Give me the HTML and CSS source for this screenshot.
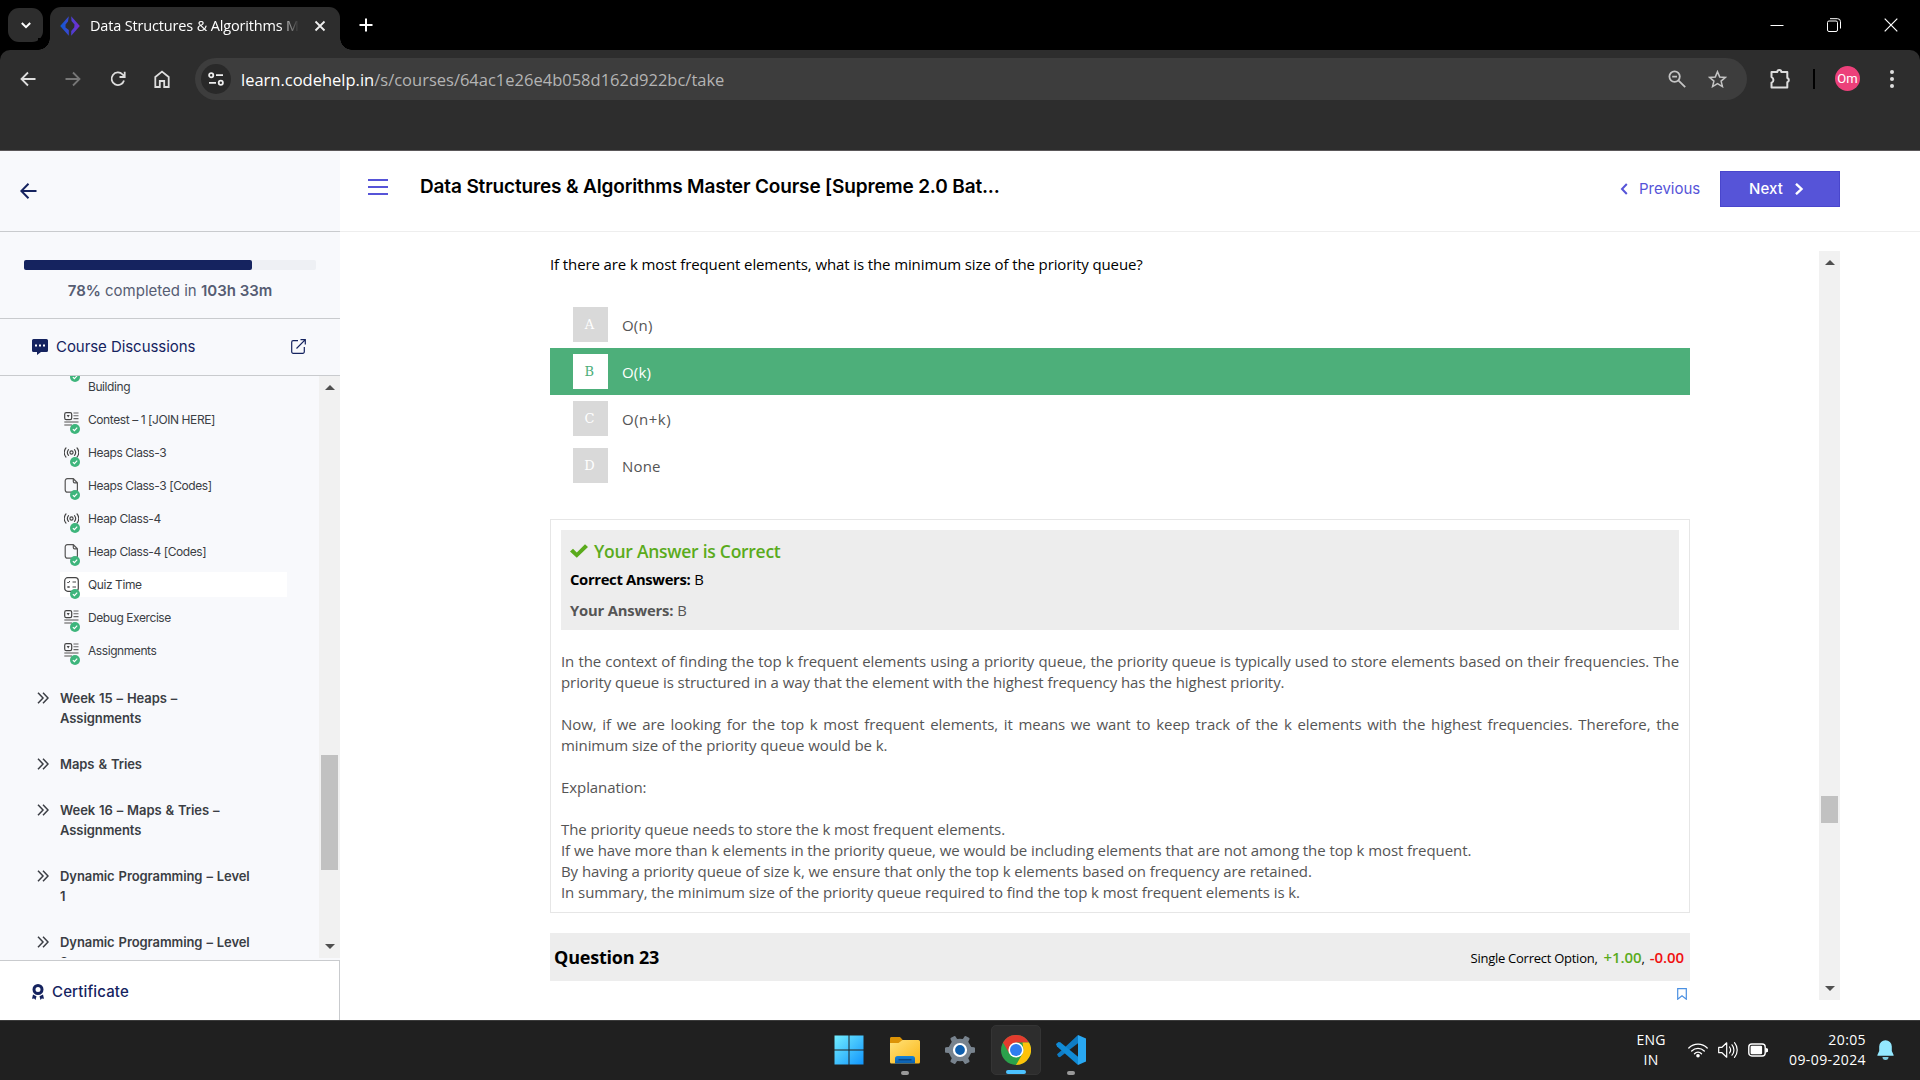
FILE: index.html
```html
<!DOCTYPE html>
<html lang="en">
<head>
<meta charset="utf-8">
<title>Data Structures &amp; Algorithms Master Course</title>
<link rel="stylesheet" href="styles.css">
</head>
<body>
<svg class="sprite" aria-hidden="true">
  <symbol id="i-article" viewBox="0 0 15 15"><rect x=".7" y=".7" width="7" height="7" rx="1.6" fill="none" stroke="#444" stroke-width="1.2"/><path d="M2.700 3h3L4.200 5.400z" fill="#444"/><path d="M9.500 1H14.500M9.500 3.800H14.500M9.500 6.600H14.500" stroke="#666" stroke-width="1.100"/><path d="M.3 10H14.500M.3 13H8" stroke="#888" stroke-width="1.700"/></symbol>
  <symbol id="i-live" viewBox="0 0 15 15"><g fill="none" stroke="#444" stroke-width="1.15" stroke-linecap="round"><circle cx="7.500" cy="7.500" r="1.600"/><path d="M4.500 4.600a4.600 4.600 0 0 0 0 5.800M10.500 4.600a4.600 4.600 0 0 1 0 5.800M2 2.900a7.400 7.400 0 0 0 0 9.200M13 2.900a7.400 7.400 0 0 1 0 9.200"/></g></symbol>
  <symbol id="i-file" viewBox="0 0 15 15"><path d="M9.300.7H3.400C1.900.7 1.200 1.500 1.200 3v8.700c0 1.600.7 2.500 2.300 2.500h7.500c1.600 0 2.400-.9 2.400-2.500V4.700zM9.300.9v2.600c0 .9.4 1.300 1.300 1.300h2.600" fill="none" stroke="#555" stroke-width="1.2"/></symbol>
  <symbol id="i-quiz" viewBox="0 0 15 15"><rect x=".7" y=".7" width="13.600" height="13.600" rx="3" fill="none" stroke="#444" stroke-width="1.200"/><path d="M3.300 5l1 1 1.600-2M8.500 5H12M3.500 9l2 2M5.500 9l-2 2M8.500 10H12" fill="none" stroke="#444" stroke-width="1"/></symbol>
  <symbol id="i-done" viewBox="0 0 10 10"><circle cx="5" cy="5" r="5" fill="#3eb57c"/><path d="M2.900 5.100l1.500 1.500 2.800-2.900" fill="none" stroke="#fff" stroke-width="1.200"/></symbol>
  <symbol id="i-more" viewBox="0 0 12 12"><path d="M1 .8L6 6l-5 5.200M6 .8L11 6l-5 5.200" fill="none" stroke="#3b3e44" stroke-width="1.500"/></symbol>
</svg>

<header class="browser">
  <div class="tabstrip">
    <div class="tab-search"><svg width="12" height="12" viewBox="0 0 12 12"><path d="M1.800 4L6 8.200 10.200 4" fill="none" stroke="#fff" stroke-width="2"/></svg></div>
    <div class="tab">
      <svg width="20" height="20" viewBox="0 0 20 20"><defs><linearGradient id="fav"><stop offset="0" stop-color="#0b5bd3"/><stop offset="1" stop-color="#7a2bd0"/></linearGradient></defs><path d="M8.800.3L.2 10l8.600 9.700V14L5.500 11.500V8.500L8 5.500zM11.200.3L19.800 10l-8.600 9.700V15l3-3.500.3-3-3-3.500z" fill="url(#fav)"/></svg>
      <span class="tab-title">Data Structures &amp; Algorithms M</span>
      <svg class="tab-close" width="12" height="12" viewBox="0 0 12 12"><path d="M1.500 1.500l9 9M10.500 1.500l-9 9" stroke="#eee" stroke-width="1.800"/></svg>
    </div>
    <svg class="tab-new" width="14" height="14" viewBox="0 0 14 14"><path d="M7 .5v13M.5 7h13" stroke="#fff" stroke-width="2"/></svg>
    <div class="window-controls">
      <svg width="14" height="14" viewBox="0 0 14 14"><path d="M.5 7.500h13" stroke="#fff"/></svg>
      <svg width="14" height="14" viewBox="0 0 14 14"><g fill="none" stroke="#fff"><rect x=".5" y="3" width="10" height="10.500" rx="1.500"/><path d="M3 .7h7.500a3 3 0 0 1 3 3V10.500"/></g></svg>
      <svg width="14" height="14" viewBox="0 0 14 14"><path d="M.7.7l12.600 12.600M13.300.7L.7 13.300" stroke="#fff" stroke-width="1.200"/></svg>
    </div>
  </div>
  <div class="toolbar">
    <nav class="nav-buttons">
      <svg width="16" height="16" viewBox="0 0 16 16"><path d="M15.500 8H1.800M8 1.500L1.500 8 8 14.500" fill="none" stroke="#ddd" stroke-width="1.800"/></svg>
      <svg width="16" height="16" viewBox="0 0 16 16"><path d="M.5 8h13.700M8 1.500L14.500 8 8 14.500" fill="none" stroke="#777" stroke-width="1.800"/></svg>
      <svg width="16" height="16" viewBox="0 0 16 16"><path d="M14 9.500A6.300 6.300 0 1 1 12.600 3.500L14.500 5.500M14.700.8V6H9.500" fill="none" stroke="#ddd" stroke-width="1.800"/></svg>
      <svg width="16" height="18" viewBox="0 0 16 18"><path d="M1.300 7L8 1.600 14.700 7v10h-4.500v-6H5.800v6H1.300z" fill="none" stroke="#ddd" stroke-width="1.800"/></svg>
    </nav>
    <div class="omnibox">
      <div class="site-info"><svg width="16" height="14" viewBox="0 0 16 14"><g fill="none" stroke="#eee" stroke-width="1.800"><circle cx="3.200" cy="3.200" r="2.100"/><path d="M8 3.200h7M1 10.800h7"/><circle cx="12.800" cy="10.800" r="2.100"/></g></svg></div>
      <span class="url"><b>learn.codehelp.in</b>/s/courses/64ac1e26e4b058d162d922bc/take</span>
      <div class="omni-actions">
        <svg width="18" height="18" viewBox="0 0 18 18"><g fill="none" stroke="#c4c4c4" stroke-width="1.800"><circle cx="6.600" cy="6.600" r="5.200"/><path d="M10.600 10.600l6.600 6.600M4.200 6.600h4.800"/></g></svg>
        <svg width="19" height="18" viewBox="0 0 20 19"><path d="M10 1.800l2.300 5.500 6 .5-4.500 3.900 1.400 5.800L10 14.400l-5.200 3.100 1.400-5.800L1.700 7.800l6-.5z" fill="none" stroke="#c4c4c4" stroke-width="1.600"/></svg>
      </div>
    </div>
    <div class="toolbar-right">
      <svg class="ext" width="21" height="20" viewBox="0 0 21 20"><path d="M1.500 3h5.800a2 2 0 0 1 4 0h6v6a2.200 2.200 0 0 1 0 4.200v5.300H1.500v-4.800a3 3 0 0 0 0-5.600z" fill="none" stroke="#ddd" stroke-width="2" stroke-linejoin="round"/></svg>
      <i class="separator"></i>
      <span class="avatar">Om</span>
      <svg class="kebab" width="4" height="18" viewBox="0 0 4 18"><g fill="#ddd"><circle cx="2" cy="2" r="2"/><circle cx="2" cy="9" r="2"/><circle cx="2" cy="16" r="2"/></g></svg>
    </div>
  </div>
</header>

<div class="page">
  <aside class="sidebar">
    <div class="side-back"><svg width="17" height="16" viewBox="0 0 17 16"><path d="M16.500 8H2M8.500.8L1.300 8l7.200 7.200" fill="none" stroke="#15235f" stroke-width="2"/></svg></div>
    <div class="side-progress">
      <div class="bar"><div class="bar-fill" style="width:78%"></div></div>
      <p><b>78%</b> completed in <b>103h 33m</b></p>
    </div>
    <div class="discussions">
      <svg width="16" height="16" viewBox="0 0 16 16"><path d="M1.500 0h13A1.500 1.500 0 0 1 16 1.500v10a1.500 1.500 0 0 1-1.500 1.500H9l-4 3v-3H1.500A1.500 1.500 0 0 1 0 11.500v-10A1.500 1.500 0 0 1 1.500 0z" fill="#15235f"/><path d="M3 5.500h2v2H3zM7 5.500h2v2H7zM11 5.500h2v2h-2z" fill="#fff"/></svg>
      <span>Course Discussions</span>
      <svg class="open" width="15" height="15" viewBox="0 0 15 15"><path d="M7 1.700H2.200A1.500 1.500 0 0 0 .7 3.200v9.600a1.500 1.500 0 0 0 1.500 1.500h9.600a1.500 1.500 0 0 0 1.500-1.500V8M9.500.7h4.800v4.800M14.300.7L5.500 9.500" fill="none" stroke="#15235f" stroke-width="1.200"/></svg>
    </div>
    <div class="curriculum">
      <div class="lessons">
        <div class="lesson lesson-wrapped"><span class="lesson-icon"><svg class="done"><use href="#i-done"/></svg></span><span>Building</span></div>
        <div class="lesson"><span class="lesson-icon"><svg><use href="#i-article"/></svg><svg class="done"><use href="#i-done"/></svg></span><span>Contest – 1 [JOIN HERE]</span></div>
        <div class="lesson"><span class="lesson-icon"><svg><use href="#i-live"/></svg><svg class="done"><use href="#i-done"/></svg></span><span>Heaps Class-3</span></div>
        <div class="lesson"><span class="lesson-icon"><svg><use href="#i-file"/></svg><svg class="done"><use href="#i-done"/></svg></span><span>Heaps Class-3 [Codes]</span></div>
        <div class="lesson"><span class="lesson-icon"><svg><use href="#i-live"/></svg><svg class="done"><use href="#i-done"/></svg></span><span>Heap Class-4</span></div>
        <div class="lesson"><span class="lesson-icon"><svg><use href="#i-file"/></svg><svg class="done"><use href="#i-done"/></svg></span><span>Heap Class-4 [Codes]</span></div>
        <div class="lesson active"><span class="lesson-icon"><svg><use href="#i-quiz"/></svg><svg class="done"><use href="#i-done"/></svg></span><span>Quiz Time</span></div>
        <div class="lesson"><span class="lesson-icon"><svg><use href="#i-article"/></svg><svg class="done"><use href="#i-done"/></svg></span><span>Debug Exercise</span></div>
        <div class="lesson"><span class="lesson-icon"><svg><use href="#i-article"/></svg><svg class="done"><use href="#i-done"/></svg></span><span>Assignments</span></div>
        <div class="section first"><svg><use href="#i-more"/></svg><span>Week 15 – Heaps –<br>Assignments</span></div>
        <div class="section"><svg><use href="#i-more"/></svg><span>Maps &amp; Tries</span></div>
        <div class="section"><svg><use href="#i-more"/></svg><span>Week 16 – Maps &amp; Tries –<br>Assignments</span></div>
        <div class="section"><svg><use href="#i-more"/></svg><span>Dynamic Programming – Level<br>1</span></div>
        <div class="section"><svg><use href="#i-more"/></svg><span>Dynamic Programming – Level<br>2</span></div>
      </div>
      <div class="scrollbar side-scroll"><i class="up"></i><i class="thumb"></i><i class="down"></i></div>
    </div>
    <div class="certificate">
      <svg width="12" height="16" viewBox="0 0 12 16"><circle cx="6" cy="5.500" r="4" fill="none" stroke="#15235f" stroke-width="3"/><path d="M1 10.500l3.500 1.700L3.500 16 2.200 14.500 0 14.800zM11 10.500l-3.500 1.700L8.500 16l1.300-1.500 2.200.3z" fill="#15235f"/></svg>
      <span>Certificate</span>
    </div>
  </aside>

  <main class="main">
    <div class="course-head">
      <svg class="menu" width="20" height="16" viewBox="0 0 20 16"><path d="M0 1h20M0 8h20M0 15h20" stroke="#5654d8" stroke-width="2"/></svg>
      <h1>Data Structures &amp; Algorithms Master Course [Supreme 2.0 Bat...</h1>
      <div class="pager">
        <a class="prev"><svg width="8" height="12" viewBox="0 0 8 12"><path d="M6.800 1L2 6l4.800 5" fill="none" stroke="#5654d8" stroke-width="2"/></svg><span>Previous</span></a>
        <a class="next"><span>Next</span><svg width="10" height="12" viewBox="0 0 10 12"><path d="M2 .8L7.500 6 2 11.200" fill="none" stroke="#fff" stroke-width="2.400"/></svg></a>
      </div>
    </div>
    <div class="quiz">
      <div class="quiz-body">
        <p class="question">If there are k most frequent elements, what is the minimum size of the priority queue?</p>
        <ul class="options">
          <li><b>A</b><span>O(n)</span></li>
          <li class="correct"><b>B</b><span>O(k)</span></li>
          <li><b>C</b><span class="wide">O(n+k)</span></li>
          <li><b>D</b><span>None</span></li>
        </ul>
        <section class="solution">
          <div class="verdict">
            <div class="verdict-title"><svg width="18" height="14" viewBox="0 0 18 14"><path d="M0 7.500L3 4.800l3.800 3.600L15 .2l3 2.800L6.800 13.800z" fill="#5aab1c"/></svg><span>Your Answer is Correct</span></div>
            <div class="answers key"><b>Correct Answers:</b> B</div>
            <div class="answers"><b>Your Answers:</b> B</div>
          </div>
          <div class="explain">
            <p>In the context of finding the top k frequent elements using a priority queue, the priority queue is typically used to store elements based on their frequencies. The priority queue is structured in a way that the element with the highest frequency has the highest priority.</p>
            <p>Now, if we are looking for the top k most frequent elements, it means we want to keep track of the k elements with the highest frequencies. Therefore, the minimum size of the priority queue would be k.</p>
            <p>Explanation:</p>
            <p>The priority queue needs to store the k most frequent elements.<br>If we have more than k elements in the priority queue, we would be including elements that are not among the top k most frequent.<br>By having a priority queue of size k, we ensure that only the top k elements based on frequency are retained.<br>In summary, the minimum size of the priority queue required to find the top k most frequent elements is k.</p>
          </div>
        </section>
        <div class="next-question">
          <h2>Question 23</h2>
          <div class="marks"><span class="kind">Single Correct Option,</span><b class="plus">+1.00</b><span>,</span><b class="minus">-0.00</b></div>
        </div>
        <svg class="bookmark" width="10" height="12" viewBox="0 0 10 12"><path d="M.7.6h8.600v10.600L5 7.800.7 11.200z" fill="none" stroke="#4a90e2" stroke-width="1.200"/></svg>
      </div>
      <div class="scrollbar main-scroll"><i class="up"></i><i class="thumb"></i><i class="down"></i></div>
    </div>
  </main>
</div>

<footer class="taskbar">
  <div class="apps">
    <div class="app"><svg width="30" height="30" viewBox="0 0 30 30"><defs><linearGradient id="win" gradientUnits="userSpaceOnUse" x1="0" y1="0" x2="30" y2="30"><stop offset="0" stop-color="#74efff"/><stop offset="1" stop-color="#0f93fb"/></linearGradient></defs><path d="M.5 .5h14v14H.5zM15.500.5h14v14h-14zM.5 15.500h14v14H.5zM15.500 15.500h14v14h-14z" fill="url(#win)"/></svg></div>
    <div class="app running"><svg width="30" height="30" viewBox="0 0 30 30"><defs><linearGradient id="fold" x1="0" y1="0" x2="1" y2="1"><stop offset="0" stop-color="#ffe27a"/><stop offset="1" stop-color="#fbb616"/></linearGradient><linearGradient id="tray" x1="0" y1="0" x2="0" y2="1"><stop offset="0" stop-color="#1683d8"/><stop offset="1" stop-color="#0b5cab"/></linearGradient></defs><path d="M0 3.500C0 2.500.7 2 1.500 2h8.500l3 3.200L10 9H0z" fill="#dc9306"/><path d="M0 8h8.500l4-3H28.500A1.500 1.500 0 0 1 30 6.500V27a1.500 1.500 0 0 1-1.500 1.500h-27A1.500 1.500 0 0 1 0 27z" fill="url(#fold)"/><path d="M5 28.500V23.500a2.500 2.500 0 0 1 2.500-2.500h15a2.500 2.500 0 0 1 2.500 2.500v5z" fill="url(#tray)"/><path d="M8.500 24.800h13" stroke="#083e75" stroke-width="1.200"/></svg></div>
    <div class="app"><svg width="30" height="30" viewBox="0 0 30 30"><g fill="#78838e"><circle cx="15" cy="15" r="11.300"/><path id="tooth" d="M10 7L5.500 10.500 3.700 12 .8 12.200Q0 12.500 0 13.300v3.400Q0 17.500.8 17.800L3.700 18 5.500 19.500 10 23z"/><use href="#tooth" transform="rotate(60 15 15)"/><use href="#tooth" transform="rotate(120 15 15)"/><use href="#tooth" transform="rotate(180 15 15)"/><use href="#tooth" transform="rotate(240 15 15)"/><use href="#tooth" transform="rotate(300 15 15)"/></g><circle cx="15" cy="15" r="6" fill="#0f5fae" stroke="#fff" stroke-width="2.200"/></svg></div>
    <div class="app focused"><svg width="30" height="30" viewBox="0 0 30 30"><circle cx="15" cy="15" r="15" fill="#2ba14b"/><path d="M2 7.500A15 15 0 0 1 28 7.500H15L8.500 18.800z" fill="#e33b2e"/><path d="M28 7.500A15 15 0 0 1 15 30L21.500 18.800 22.500 15 21.500 7.500z" fill="#fdc20a"/><circle cx="15" cy="15" r="7.600" fill="#fff"/><circle cx="15" cy="15" r="6" fill="#2f7df0"/></svg></div>
    <div class="app running"><svg width="30" height="30" viewBox="0 0 30 30"><path d="M22 0L6.500 14.500 1 19.200l1.300 2.600 1.500.5L22 8.200z" fill="#0f7cc4"/><path d="M22 30L1 11.500 0 9l2.500-2 1.800.2L22 21.800z" fill="#118bd6"/><path d="M22 0l8 3.500v23L22 30z" fill="#29a8f2"/></svg></div>
  </div>
  <div class="systray">
    <div class="lang"><span>ENG</span><span>IN</span></div>
    <svg class="wifi" width="20" height="16" viewBox="0 0 20 16"><g fill="none" stroke="#fff" stroke-width="1.300" stroke-linecap="round"><path d="M.8 6A13 13 0 0 1 19.200 6M3.700 9a9 9 0 0 1 12.600 0M6.500 11.700a5 5 0 0 1 7 0"/></g><circle cx="10" cy="13.800" r="1.800" fill="#fff"/></svg>
    <svg class="sound" width="20" height="18" viewBox="0 0 20 18"><g fill="none" stroke="#fff" stroke-width="1.200" stroke-linecap="round" stroke-linejoin="round"><path d="M.7 6.300h3.300l4.700-4.500v14.400L4 11.700H.7z"/><path d="M11.500 6a5 5 0 0 1 0 6M14 3.800a8 8 0 0 1 0 10.400M16.500 1.600a11.500 11.500 0 0 1 0 14.800"/></g></svg>
    <svg class="battery" width="20" height="14" viewBox="0 0 20 14"><rect x=".8" y="1" width="16.400" height="12" rx="3" fill="none" stroke="#fff" stroke-width="1.400"/><rect x="2.600" y="2.800" width="11.500" height="8.400" rx="1.200" fill="#fff"/><path d="M17.500 4.800l2.500 1v3l-2.500 1z" fill="#fff"/></svg>
    <div class="clock"><span>20:05</span><span>09-09-2024</span></div>
    <svg class="bell" width="17" height="20" viewBox="0 0 17 20"><path d="M8.500.3a6.300 6.300 0 0 0-6.300 6.200v4.500L.4 15v.8h16.200V15l-1.800-4V6.500A6.300 6.300 0 0 0 8.500.3z" fill="#93e8ff"/><path d="M5.500 17h6a3 3 0 0 1-6 0z" fill="#7fc9de"/></svg>
  </div>
</footer>
</body>
</html>
```
FILE: styles.css
```css
* { box-sizing: border-box; }
body {
  margin: 0;
  width: 1920px;
  height: 1080px;
  overflow: hidden;
  display: flex;
  flex-direction: column;
  font-family: "Open Sans", "Noto Sans", sans-serif;
  background: #fff;
}
svg { display: block; flex: none; }
.sprite { position: absolute; width: 0; height: 0; }
h1, h2, p, ul { margin: 0; padding: 0; }

/* Browser chrome */
.browser { height: 151px; flex: none; background: #000; }
.tabstrip { height: 50px; display: flex; align-items: center; padding-left: 8px; }
.tab-search {
  width: 35px; height: 34px; border-radius: 11px; background: #2d2d2d;
  display: flex; align-items: center; justify-content: center;
}
.tab {
  position: relative;
  align-self: flex-end;
  width: 290px; height: 43px; margin-left: 7px; padding: 0 14px 6px 10px;
  background: #2d2d2d; border-radius: 11px 11px 0 0;
  display: flex; align-items: center;
}
.tab::before, .tab::after {
  content: ""; position: absolute; bottom: 0; width: 12px; height: 12px;
}
.tab::before { left: -12px; background: radial-gradient(circle at 0 0, #000 11.5px, #2d2d2d 12px); }
.tab::after { right: -12px; background: radial-gradient(circle at 100% 0, #000 11.5px, #2d2d2d 12px); }
.tab-title {
  width: 211px; margin-left: 10px; overflow: hidden; white-space: nowrap;
  font-size: 14.5px; letter-spacing: -0.16px; color: #fff;
  -webkit-mask-image: linear-gradient(90deg, #000 90%, transparent 99%);
  mask-image: linear-gradient(90deg, #000 90%, transparent 99%);
}
.tab-close { margin-left: 13px; }
.tab-new { margin-left: 19px; }
.window-controls { margin-left: auto; padding-right: 22px; display: flex; gap: 43px; }
.toolbar {
  height: 101px; background: #2d2d2d; border-bottom: 1px solid #5a5759;
  border-radius: 10px 10px 0 0; padding: 8px 26px 0 20px;
  display: flex; align-items: flex-start;
}
.nav-buttons { height: 42px; display: flex; align-items: center; gap: 28.800px; }
.omnibox {
  width: 1552px; height: 42px; margin-left: 24.600px; padding: 0 20px 0 6px;
  border-radius: 21px; background: #3d3d3d; display: flex; align-items: center;
}
.site-info {
  width: 30px; height: 30px; border-radius: 50%; background: #292929;
  display: flex; align-items: center; justify-content: center;
}
.url { margin-left: 10px; font-size: 16.5px; color: #b4b4b4; white-space: nowrap; }
.url b { font-weight: 400; color: #fff; }
.omni-actions { margin-left: auto; display: flex; gap: 22px; }
.toolbar-right { height: 41px; margin-left: auto; display: flex; align-items: center; }
.separator { width: 2px; height: 20px; background: #000; margin: 0 20px 0 22px; }
.avatar {
  width: 25px; height: 25px; border-radius: 50%; background: #ec407a; color: #fff;
  font: 13px/25px Roboto, sans-serif; text-align: center;
}
.kebab { margin-left: 30px; }

/* Page */
.page { height: 869px; flex: none; display: flex; }
.sidebar {
  width: 340px; flex: none; background: #f8f9fc; color: #15235f;
  font-family: Inter, sans-serif; display: flex; flex-direction: column;
}
.side-back { height: 81px; padding: 32px 0 0 20px; border-bottom: 1px solid #c9cbce; flex: none; }
.side-progress { height: 87px; padding: 28px 24px 0; border-bottom: 1px solid #c9cbce; flex: none; }
.bar { height: 10px; border-radius: 2px; background: #eef0f4; }
.bar-fill { height: 10px; border-radius: 2px; background: #15235f; }
.side-progress p { margin-top: 10px; text-align: center; font-size: 15px; line-height: 22px; color: #565d73; }
.side-progress b { font-weight: 600; }
.discussions {
  height: 57px; flex: none; padding: 0 34px 1px 32px; border-bottom: 1px solid #c9cbce;
  display: flex; align-items: center; font-size: 15px; letter-spacing: -0.06px;
}
.discussions span { margin-left: 8px; }
.open { margin-left: auto; }
.curriculum { height: 582px; flex: none; display: flex; overflow: hidden; }
.lessons { width: 319px; margin-top: -2px; padding-left: 37px; color: #3b3e44; }
.lesson {
  width: 227px; height: 25px; margin: 0 0 8px 23px; padding-left: 4px;
  display: flex; align-items: center; font-size: 12px; letter-spacing: -0.42px; white-space: nowrap;
}
.lesson.active { background: #fff; }
.lesson-icon { position: relative; width: 24px; height: 15px; flex: none; }
.lesson-icon svg { width: 15px; height: 15px; }
.lesson-icon .done { position: absolute; left: 6px; top: 12px; width: 10px; height: 10px; }
.lesson-wrapped .done { top: -7px; }
.section {
  display: flex; align-items: flex-start; margin-top: 26px;
  font-size: 13px; font-weight: 600; line-height: 20px; letter-spacing: -0.08px; word-spacing: 0.8px; white-space: nowrap;
}
.section.first { margin-top: 25px; }
.section svg { width: 12px; height: 12px; margin: 4px 11px 0 0; }
.certificate {
  height: 60px; flex: none; margin-top: 2px; padding: 2px 0 0 32px; background: #fff;
  border: solid #c9cbce; border-width: 1px 1px 0 0;
  display: flex; align-items: center; gap: 8px; font-size: 15px; font-weight: 500; letter-spacing: 0.14px;
}

.scrollbar { width: 21px; flex: none; background: #f1f1f1; display: flex; flex-direction: column; align-items: center; }
.up, .down { border: solid transparent; border-width: 0 5px; }
.up { border-bottom: 5px solid #505050; }
.down { border-top: 5px solid #505050; }
.thumb { width: 17px; background: #c1c1c1; }
.side-scroll .up { margin-top: 9px; }
.side-scroll .thumb { height: 115px; margin-top: 365px; }
.side-scroll .down { margin-top: 74px; }

.main { flex: 1; font-size: 15px; }
.course-head {
  height: 81px; padding: 0 80px 0 28px; border-bottom: 1px solid #eee; color: #000;
  font-family: Inter, sans-serif; display: flex; align-items: flex-start;
}
.menu { margin-top: 28px; }
.course-head h1 { margin: 21px 0 0 32px; font-size: 19px; line-height: 30px; font-weight: 600; letter-spacing: -0.15px; white-space: nowrap; }
.pager { margin: 20px 0 0 auto; display: flex; }
.prev { width: 100px; height: 35px; display: flex; align-items: center; gap: 11px; color: #5654d8; }
.next {
  width: 120px; height: 36px; padding: 0 0 1px 28px; background: #5654d8; border: 1px solid #4946cc; color: #fff; font-weight: 500;
  display: flex; align-items: center; gap: 11px; letter-spacing: 0.1px;
}
.quiz { height: 749px; margin: 19px 80px 0 210px; display: flex; overflow: hidden; justify-content: space-between; }
.quiz-body { width: 1140px; }
.question { line-height: 26px; white-space: nowrap; color: #000; letter-spacing: -0.11px; }
.options { margin-top: 24px; list-style: none; color: #555; }
.options li { height: 47px; padding-left: 23px; display: flex; align-items: center; letter-spacing: 0.2px; }
.options .wide { letter-spacing: 0.5px; }
.options b {
  width: 35px; height: 35px; margin-right: 14px; background: #d9d9d9; color: #fff;
  font: 13px/36px "DejaVu Serif", serif; text-align: center; padding-right: 2px;
}
.options .correct { background: #4daf7a; color: #fff; }
.options .correct b { background: #fff; color: #4daf7a; }
.solution { height: 394px; margin-top: 30px; padding: 10px 10px 0; border: 1px solid #e6e6e6; }
.verdict { height: 100px; padding: 8px 10px 0 9px; background: #ededed; color: #555; }
.verdict-title { display: flex; align-items: center; gap: 6px; height: 26px; color: #5aab1c; font-size: 17.5px; font-weight: 600; letter-spacing: -0.27px; }
.answers { height: 31px; line-height: 31px; font-size: 14.8px; }
.answers b { letter-spacing: -0.33px; }
.answers:last-child b { letter-spacing: -0.18px; }
.answers.key { color: #000; }
.explain { margin-top: 21px; line-height: 21px; color: #555; text-align: justify; letter-spacing: -0.075px; }
.explain p { margin-bottom: 21px; }
.next-question { height: 48px; margin-top: 20px; padding: 0 6px 0 4px; background: #ededed; display: flex; align-items: center; justify-content: space-between; color: #000; }
.next-question h2 { font-size: 18px; font-weight: 700; letter-spacing: -0.2px; }
.marks { display: flex; align-items: baseline; font-size: 13px; }
.kind { letter-spacing: -0.26px; }
.marks b { font-size: 15px; font-weight: 600; letter-spacing: -0.1px; }
.plus { color: #5aab1c; margin-left: 6px; }
.minus { color: #f01010; margin-left: 5px; }
.bookmark { margin: 7px 3px 0 auto; }
.main-scroll .up { margin-top: 9px; }
.main-scroll .thumb { height: 27px; margin-top: 531px; }
.main-scroll .down { margin-top: 163px; }

/* Taskbar */
.taskbar { height: 60px; flex: none; background: #202020; border-top: 1px solid #3b3b3b; display: flex; color: #fff; }
.apps { display: flex; margin-left: 824px; padding-top: 4px; gap: 5.5px; }
.app { position: relative; width: 50px; height: 50px; border-radius: 5px; display: flex; align-items: center; justify-content: center; }
.app.focused { background: #2d2d2d; border: 1px solid #343434; }
.app.running::after, .app.focused::after { content: ""; position: absolute; bottom: 0; height: 4px; width: 8px; border-radius: 2px; background: #999; }
.app.focused::after { width: 20px; background: #4cc2ff; }
.systray { margin-left: auto; display: flex; align-items: center; padding: 0 26px 2px 0; font-size: 14px; line-height: 20px; }
.lang { display: flex; flex-direction: column; align-items: center; width: 30px; letter-spacing: 0.15px; }
.wifi { margin-left: 22px; }
.sound, .battery { margin-left: 10px; }
.clock { display: flex; flex-direction: column; align-items: flex-end; width: 98px; letter-spacing: 0.39px; }
.bell { margin-left: 11px; }
```
